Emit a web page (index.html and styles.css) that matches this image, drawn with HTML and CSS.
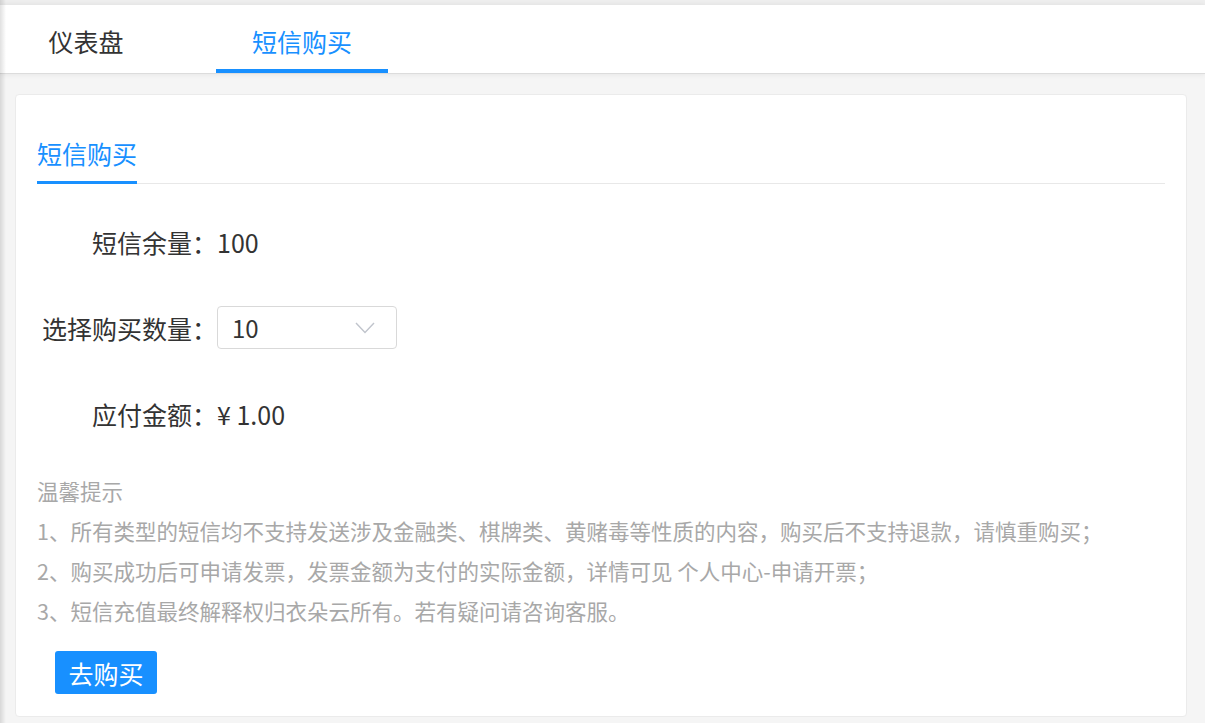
FILE: index.html
```html
<!DOCTYPE html>
<html lang="zh-CN">
<head>
  <meta charset="UTF-8">
  <meta name="viewport" content="width=device-width, initial-scale=1.0">
  <title>短信购买</title>
  <link rel="stylesheet" href="styles.css">
</head>
<body>
  <div class="app">
    <!-- Top tabs -->
    <nav class="top-tabs">
      <div class="top-tab">仪表盘</div>
      <div class="top-tab active">短信购买</div>
    </nav>

    <main class="page">
      <section class="card">
        <div class="card-tabs">
          <div class="card-tab active">短信购买</div>
        </div>

        <div class="form">
          <div class="form-row">
            <label class="form-label">短信余量：</label>
            <span class="form-value">100</span>
          </div>
          <div class="form-row">
            <label class="form-label">选择购买数量：</label>
            <div class="select">
              <span>10</span>
              <svg class="select-arrow" width="20" height="12" viewBox="0 0 20 12">
                <polyline points="1,1 10,10.5 19,1" fill="none" stroke="#c0c4cc" stroke-width="1.4"/>
              </svg>
            </div>
          </div>
          <div class="form-row">
            <label class="form-label">应付金额：</label>
            <span class="form-value">¥ 1.00</span>
          </div>
        </div>

        <div class="notes">
          <p>温馨提示</p>
          <p>1、所有类型的短信均不支持发送涉及金融类、棋牌类、黄赌毒等性质的内容，购买后不支持退款，请慎重购买；</p>
          <p>2、购买成功后可申请发票，发票金额为支付的实际金额，详情可见 个人中心-申请开票；</p>
          <p>3、短信充值最终解释权归衣朵云所有。若有疑问请咨询客服。</p>
        </div>

        <button class="buy-btn">去购买</button>
      </section>
    </main>
  </div>
</body>
</html>
```

FILE: styles.css
```css
body {
  margin: 0;
  padding: 0;
  background-color: #f5f5f5;
  font-family: "Noto Sans CJK SC", "Noto Sans", sans-serif;
  color: #333;
}

.app {
  position: relative;
  min-height: 723px;
  padding-top: 5px;
  background: #efefef;

  /* sidebar shadow along the left edge */
  &::before {
    content: "";
    position: absolute;
    left: 0;
    top: 0;
    bottom: 0;
    width: 6px;
    background: linear-gradient(to right, rgba(0, 0, 0, 0.12), rgba(0, 0, 0, 0));
    z-index: 5;
  }
}

.top-tabs {
  display: flex;
  gap: 44px;
  height: 68px;
  background: #fff;
  border-bottom: 1px solid #dcdcdc;
  box-shadow: 0 0 6px rgba(0, 0, 0, 0.08);
  position: relative;

  .top-tab {
    width: 172px;
    box-sizing: border-box;
    padding-top: 22px;
    font-size: 25px;
    line-height: 28px;
    text-align: center;
    color: #333;
    border-bottom: 4px solid transparent;

    &.active {
      color: #1890ff;
      border-bottom-color: #1890ff;
    }
  }
}

.page {
  background: #f5f5f5;
  padding: 20px 18px 7px 15px;
}

.card {
  background: #fff;
  border: 1px solid #ebebeb;
  border-radius: 4px;
  padding: 0 21px 22px 21px;
}

.card-tabs {
  display: flex;
  padding-top: 41px;
  border-bottom: 1px solid #e8e8e8;

  .card-tab {
    font-size: 25px;
    line-height: 34px;
    padding-bottom: 11px;
    color: #333;
    border-bottom: 3px solid transparent;
    margin-bottom: -1px;

    &.active {
      color: #1890ff;
      border-bottom-color: #1890ff;
    }
  }
}

.form {
  display: flex;
  flex-direction: column;
  gap: 43px;
  padding-top: 36px;

  .form-row {
    display: flex;
    align-items: center;
    height: 43px;
    font-size: 25px;
  }

  .form-label {
    width: 180px;
    text-align: right;
    color: #333;
  }

  .form-value {
    color: #333;
  }
}

.select {
  width: 180px;
  height: 43px;
  box-sizing: border-box;
  border: 1px solid #d9d9d9;
  border-radius: 4px;
  display: flex;
  align-items: center;
  justify-content: space-between;
  padding: 0 21px 0 14px;
  font-size: 24px;
  color: #333;
}

.notes {
  margin-top: 36px;
  font-size: 21.5px;
  line-height: 40px;
  color: #a8a8a8;

  p {
    margin: 0;
  }
}

.buy-btn {
  margin: 20px 0 0 18px;
  width: 102px;
  height: 43px;
  padding: 0;
  background: #1890ff;
  color: #fff;
  border: none;
  border-radius: 3px;
  font-family: inherit;
  font-size: 25px;
  cursor: pointer;
}
```
